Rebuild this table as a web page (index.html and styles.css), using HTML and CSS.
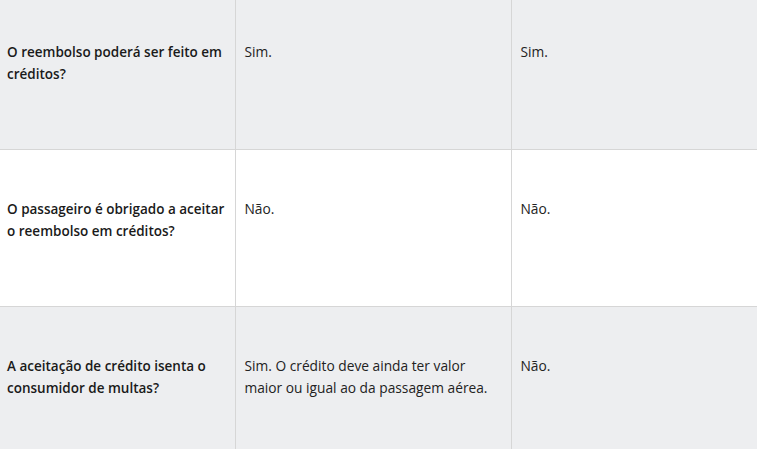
FILE: index.html
```html
<!DOCTYPE html>
<html lang="pt">
<head>
<meta charset="utf-8">
<link rel="stylesheet" href="styles.css">
</head>
<body>
<div class="wrap">
<table class="cmp">
  <tr class="odd">
    <td class="q">O reembolso poderá ser feito em créditos?</td>
    <td>Sim.</td>
    <td>Sim.</td>
  </tr>
  <tr class="even">
    <td class="q">O passageiro é obrigado a aceitar o reembolso em créditos?</td>
    <td>Não.</td>
    <td>Não.</td>
  </tr>
  <tr class="odd">
    <td class="q">A aceitação de crédito isenta o consumidor de multas?</td>
    <td>Sim. O crédito deve ainda ter valor maior ou igual ao da passagem aérea.</td>
    <td>Não.</td>
  </tr>
</table>
</div>
</body>
</html>
```
FILE: styles.css
```css
html, body {
  margin: 0;
  padding: 0;
  background: #ffffff;
}
.wrap {
  width: 757px;
  height: 449px;
  overflow: hidden;
}
.cmp {
  border-collapse: collapse;
  table-layout: fixed;
  width: 757px;
  margin-top: -8px;
  font-family: "Open Sans", sans-serif;
  font-size: 13.75px;
  line-height: 22px;
  color: #222222;
}
.cmp td {
  vertical-align: top;
  height: 157px;
  box-sizing: border-box;
  padding: 48px 10px 0 9px;
  border-top: 1px solid #d6d6d6;
  border-left: 1px solid #d6d6d6;
}
.cmp td:first-child {
  width: 235px;
  border-left: none;
  padding-left: 7px;
}
.cmp td:nth-child(2) {
  width: 276px;
}
.cmp td.q {
  font-size: 13.5px;
  font-weight: 600;
  color: #1a1a1a;
}
.odd td {
  background: #edeef0;
}
.even td {
  background: #ffffff;
}
```
